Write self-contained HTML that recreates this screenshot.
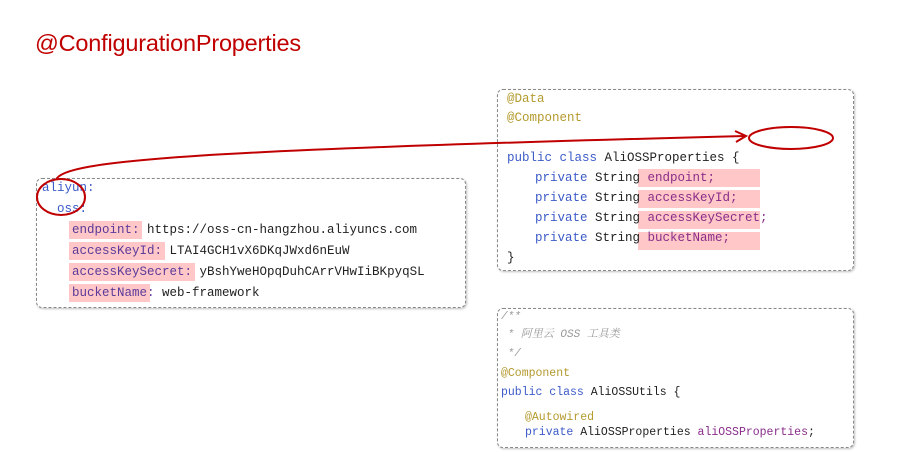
<!DOCTYPE html>
<html><head><meta charset="utf-8"><style>
body{margin:0;width:919px;height:460px;background:#fff;position:relative;overflow:hidden;font-family:"Liberation Mono",monospace;}
.t{position:absolute;left:35px;top:30px;font:23.5px "Liberation Sans",sans-serif;color:#c00000;white-space:nowrap;letter-spacing:-0.2px}
.box{position:absolute;border:1px dashed #888;border-radius:6px;box-shadow:1px 1px 2px rgba(0,0,0,.25);background:#fff;}
.l{position:absolute;font-size:12.5px;line-height:16px;white-space:pre;color:#222;}
.hl{position:absolute;background:#ffc7c7;}
.kw{color:#3c5bc8}.an{color:#b49a2e}.pr{color:#8a2d8a}.cm{color:#999;font-style:italic}.k{color:#5a3a9a}
</style></head><body>
<div class="t">@ConfigurationProperties</div>

<div class="box" style="left:36px;top:178px;width:428px;height:128px"></div>
<div class="hl" style="left:69px;top:221px;width:73px;height:18px"></div>
<div class="hl" style="left:69px;top:242px;width:96px;height:18px"></div>
<div class="hl" style="left:69px;top:263px;width:126px;height:18px"></div>
<div class="hl" style="left:69px;top:284px;width:81px;height:18px"></div>
<div class="l kw" style="left:42px;top:180px">aliyun:</div>
<div class="l kw" style="left:57px;top:201px">oss:</div>
<div class="l" style="left:72px;top:222px"><span class="k">endpoint:</span> https://oss-cn-hangzhou.aliyuncs.com</div>
<div class="l" style="left:72px;top:243px"><span class="k">accessKeyId:</span> LTAI4GCH1vX6DKqJWxd6nEuW</div>
<div class="l" style="left:72px;top:264px"><span class="k">accessKeySecret:</span> yBshYweHOpqDuhCArrVHwIiBKpyqSL</div>
<div class="l" style="left:72px;top:285px"><span class="k">bucketName:</span> web-framework</div>

<div class="box" style="left:497px;top:89px;width:355px;height:180px"></div>
<div class="hl" style="left:638px;top:169px;width:122px;height:18px"></div>
<div class="hl" style="left:638px;top:190px;width:122px;height:18px"></div>
<div class="hl" style="left:638px;top:211px;width:122px;height:18px"></div>
<div class="hl" style="left:638px;top:232px;width:122px;height:18px"></div>
<div class="l an" style="left:507px;top:91px">@Data</div>
<div class="l an" style="left:507px;top:110px">@Component</div>
<div class="l" style="left:507px;top:150px"><span class="kw">public class</span> AliOSSProperties {</div>
<div class="l" style="left:535px;top:170px"><span class="kw">private</span> String <span class="pr">endpoint;</span></div>
<div class="l" style="left:535px;top:190px"><span class="kw">private</span> String <span class="pr">accessKeyId;</span></div>
<div class="l" style="left:535px;top:210px"><span class="kw">private</span> String <span class="pr">accessKeySecret;</span></div>
<div class="l" style="left:535px;top:230px"><span class="kw">private</span> String <span class="pr">bucketName;</span></div>
<div class="l" style="left:507px;top:250px">}</div>

<div class="box" style="left:497px;top:308px;width:355px;height:138px"></div>
<div class="l cm" style="left:501px;top:309px;font-size:11px">/**</div>
<div class="l cm" style="left:501px;top:327px;font-size:11px;font-family:'Liberation Mono','Noto Serif CJK SC',monospace"> * 阿里云 OSS 工具类</div>
<div class="l cm" style="left:501px;top:346px;font-size:11px"> */</div>
<div class="l an" style="left:501px;top:366px;font-size:11.5px">@Component</div>
<div class="l" style="left:501px;top:385px;font-size:11.5px"><span class="kw">public class</span> AliOSSUtils {</div>
<div class="l an" style="left:525px;top:410px;font-size:11.5px">@Autowired</div>
<div class="l" style="left:525px;top:425px;font-size:11.5px"><span class="kw">private</span> AliOSSProperties <span class="pr">aliOSSProperties</span>;</div>

<svg width="919" height="460" style="position:absolute;left:0;top:0">
<g fill="none" stroke="#c00000" stroke-width="2">
<ellipse cx="61" cy="197" rx="24" ry="18"/>
<ellipse cx="791" cy="138" rx="42" ry="11"/>
<path d="M56 180 C 62 160, 200 150, 745 136"/>
<path d="M735 131 L746 136 L736 142"/>
</g>
</svg>
</body></html>
